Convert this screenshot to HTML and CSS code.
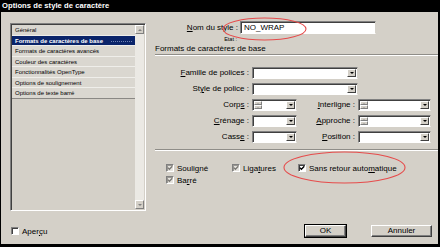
FILE: index.html
```html
<!DOCTYPE html>
<html lang="fr">
<head>
<meta charset="utf-8">
<link rel="stylesheet" href="styles.css">
</head>
<body>
<div class="window">
  <div class="titlebar">Options de style de caractère</div>
  <div class="client">
    <div class="left">
      <div class="list">
        <div class="rows">
          <div class="row">Général</div>
          <div class="row sel"><span>Formats de caractères de base</span></div>
          <div class="row">Formats de caractères avancés</div>
          <div class="row">Couleur des caractères</div>
          <div class="row">Fonctionnalités OpenType</div>
          <div class="row">Options de soulignement</div>
          <div class="row last">Options de texte barré</div>
        </div>
        <div class="scroll">
          <div class="sbtn"><span class="up"></span></div>
          <div class="track"></div>
          <div class="sbtn"><span class="down"></span></div>
        </div>
      </div>
      <div class="apercu"><span class="cb white"></span><span>Aper<u>ç</u>u</span></div>
    </div>
    <div class="right">
      <div class="name-row">
        <label class="name-label"><u>N</u>om du style :</label>
        <div class="field name-field">NO_WRAP</div>
      </div>
      <div class="etat">Etat :</div>
      <div class="section">Formats de caractères de base</div>
      <div class="sep"></div>
      <div class="form">
        <label class="lbl"><u>F</u>amille de polices :</label>
        <div class="field combo wide"><span class="fill"></span><span class="dd"><i></i></span></div>
        <span></span>
        <label class="lbl">St<u>y</u>le de police :</label>
        <div class="field combo wide"><span class="fill"></span><span class="dd"><i></i></span></div>
        <span></span>
        <label class="lbl">Corp<u>s</u> :</label>
        <div class="field combo"><span class="spin"><b><i class="su"></i></b><b><i class="sd"></i></b></span><span class="fill"></span><span class="dd"><i></i></span></div>
        <label class="lbl"><u>I</u>nterligne :</label>
        <div class="field combo"><span class="spin"><b><i class="su"></i></b><b><i class="sd"></i></b></span><span class="fill"></span><span class="dd"><i></i></span></div>
        <label class="lbl"><u>C</u>rénage :</label>
        <div class="field combo"><span class="fill"></span><span class="dd"><i></i></span></div>
        <label class="lbl"><u>A</u>pproche :</label>
        <div class="field combo"><span class="spin"><b><i class="su"></i></b><b><i class="sd"></i></b></span><span class="fill"></span><span class="dd"><i></i></span></div>
        <label class="lbl">Cass<u>e</u> :</label>
        <div class="field combo"><span class="fill"></span><span class="dd"><i></i></span></div>
        <label class="lbl"><u>P</u>osition :</label>
        <div class="field combo"><span class="fill"></span><span class="dd"><i></i></span></div>
      </div>
      <div class="sep sep2"></div>
      <div class="checks">
        <div class="chk"><span class="cb gray"><svg viewBox="0 0 6 6"><path d="M0.8 2.6 L2.4 4.3 L5.3 1.2"/></svg></span><span>Souli<u>g</u>né</span></div>
        <div class="chk"><span class="cb gray"><svg viewBox="0 0 6 6"><path d="M0.8 2.6 L2.4 4.3 L5.3 1.2"/></svg></span><span>Liga<u>t</u>ures</span></div>
        <div class="chk"><span class="cb white"><svg class="blk" viewBox="0 0 6 6"><path d="M0.8 2.6 L2.4 4.3 L5.3 1.2"/></svg></span><span>Sans retour auto<u>m</u>atique</span></div>
        <div class="chk"><span class="cb gray"><svg viewBox="0 0 6 6"><path d="M0.8 2.6 L2.4 4.3 L5.3 1.2"/></svg></span><span>Ba<u>r</u>ré</span></div>
      </div>
      <div class="buttons">
        <div class="btn ok">OK</div>
        <div class="btn cancel">Annuler</div>
      </div>
    </div>
  </div>
  <svg class="marks" width="440" height="247" viewBox="0 0 440 247">
    <ellipse cx="264.5" cy="29" rx="41.5" ry="11" />
    <ellipse cx="344.5" cy="167.5" rx="60.5" ry="15.5" />
  </svg>
</div>
</body>
</html>
```
FILE: styles.css
```css
* { box-sizing: border-box; }
html, body { margin: 0; padding: 0; }
body {
  width: 440px;
  height: 247px;
  overflow: hidden;
  font-family: "Liberation Sans", Arial, sans-serif;
  font-size: 8px;
  color: #000;
}
u { text-decoration: underline; text-underline-offset: 1px; }
.window {
  position: relative;
  width: 440px;
  height: 247px;
  background: #000;
  display: flex;
  flex-direction: column;
}
.titlebar {
  height: 12px;
  line-height: 12px;
  padding-left: 2px;
  color: #fff;
  font-weight: bold;
  font-size: 7.6px;
  letter-spacing: 0.05px;
}
.client {
  flex: 1;
  margin: 0 2px 3px 1px;
  background: #d4d0c8;
  display: flex;
}
.left {
  width: 145px;
  padding: 11px 0 0 9px;
  display: flex;
  flex-direction: column;
}
.list {
  width: 136px;
  height: 188px;
  border-top: 1px solid #808080;
  border-left: 1px solid #808080;
  border-bottom: 1px solid #fff;
  border-right: 1px solid #fff;
  box-shadow: inset 1px 1px 0 #404040, inset -1px -1px 0 #d4d0c8;
  padding: 1px;
  display: flex;
  background: #d4d0c8;
}
.rows { flex: 1; }
.row {
  height: 10.5px;
  line-height: 10px;
  font-size: 6px;
  padding-left: 3px;
  background: #dad7d0;
  border-bottom: 1px solid #efeeea;
  white-space: nowrap;
}
.row.last { border-bottom: 1px solid #8a8884; }
.row.sel {
  background: #0a246a;
  color: #fff;
  font-weight: bold;
  position: relative;
}
.row.sel::after {
  content: "";
  position: absolute;
  left: 99px;
  right: 3px;
  top: 5px;
  border-top: 1px dotted #6f82b4;
}
.scroll {
  width: 9px;
  display: flex;
  flex-direction: column;
  background: #ebe9e4;
}
.track { flex: 1; }
.sbtn {
  height: 9px;
  background: #d4d0c8;
  border-top: 1px solid #fff;
  border-left: 1px solid #fff;
  border-right: 1px solid #808080;
  border-bottom: 1px solid #808080;
  display: flex;
  align-items: center;
  justify-content: center;
}
.up, .down { width: 0; height: 0; border-left: 2px solid transparent; border-right: 2px solid transparent; }
.up { border-bottom: 2px solid #808080; }
.down { border-top: 2px solid #808080; }
.apercu {
  margin-top: 15px;
  display: flex;
  align-items: center;
  gap: 3px;
  height: 10px;
  padding-left: 1px;
}
.right {
  flex: 1;
  margin-left: 9px;
  padding-top: 9px;
  padding-bottom: 7px;
  display: flex;
  flex-direction: column;
}
.name-row {
  display: flex;
  align-items: center;
  height: 13px;
}
.name-label {
  width: 83px;
  text-align: right;
  margin-right: 2px;
  white-space: nowrap;
}
.field {
  background: #fff;
  border-top: 1px solid #808080;
  border-left: 1px solid #808080;
  border-bottom: 1px solid #fff;
  border-right: 1px solid #d4d0c8;
  box-shadow: inset 1px 1px 0 #404040;
}
.name-field {
  width: 136px;
  height: 13px;
  line-height: 11px;
  padding-left: 3px;
  font-size: 8px;
}
.etat {
  width: 82px;
  height: 10px;
  line-height: 10px;
  text-align: right;
  font-size: 5.5px;
}
.section {
  height: 10px;
  line-height: 10px;
  font-size: 8px;
  white-space: nowrap;
}
.sep {
  height: 2px;
  border-top: 1px solid #8f8d88;
  border-bottom: 1px solid #fff;
}
.form {
  margin-top: 11px;
  display: grid;
  grid-template-columns: 97px 45px 61px 73px;
  grid-auto-rows: 12px;
  row-gap: 4px;
}
.lbl {
  text-align: right;
  padding-right: 3px;
  line-height: 12px;
  white-space: nowrap;
}
.combo {
  display: flex;
  align-items: stretch;
  padding: 1px;
}
.combo.wide { grid-column: span 2; width: 106px; }
.fill { flex: 1; }
.dd {
  width: 9px;
  background: #d4d0c8;
  border-top: 1px solid #fff;
  border-left: 1px solid #fff;
  border-right: 1px solid #404040;
  border-bottom: 1px solid #404040;
  display: flex;
  align-items: center;
  justify-content: center;
}
.dd i {
  display: block;
  width: 0; height: 0;
  border-left: 2px solid transparent;
  border-right: 2px solid transparent;
  border-top: 2px solid #000;
}
.spin {
  width: 8px;
  display: flex;
  flex-direction: column;
}
.spin b {
  flex: 1;
  background: #d4d0c8;
  border-top: 1px solid #fff;
  border-left: 1px solid #fff;
  border-right: 1px solid #808080;
  border-bottom: 1px solid #808080;
  display: flex;
  align-items: center;
  justify-content: center;
}
.spin i { display: block; width: 0; height: 0; border-left: 1.5px solid transparent; border-right: 1.5px solid transparent; }
.spin .su { border-bottom: 1.5px solid #9a9893; }
.spin .sd { border-top: 1.5px solid #9a9893; }
.sep2 { margin-top: 6px; }
.checks {
  margin-top: 12px;
  padding-left: 11px;
  display: grid;
  grid-template-columns: 66px 66px auto;
  grid-auto-rows: 10px;
  row-gap: 2px;
}
.chk {
  display: flex;
  align-items: center;
  gap: 3px;
  white-space: nowrap;
}
.cb {
  width: 8px;
  height: 8px;
  flex: none;
  border-top: 1px solid #808080;
  border-left: 1px solid #808080;
  border-bottom: 1px solid #fff;
  border-right: 1px solid #fff;
  display: flex;
  align-items: center;
  justify-content: center;
}
.cb.white { background: #fff; box-shadow: inset 1px 1px 0 #404040; }
.cb.gray { background: #e6e4df; box-shadow: inset 1px 1px 0 #9a9893; }
.cb svg { width: 6px; height: 6px; display: block; }
.cb svg path { fill: none; stroke: #7a7874; stroke-width: 1.3; }
.cb svg.blk path { stroke: #000; }
.buttons {
  margin-top: auto;
  display: flex;
  justify-content: flex-end;
  gap: 25px;
  padding-right: 6px;
}
.btn {
  height: 12px;
  line-height: 10px;
  text-align: center;
  background: #d4d0c8;
  border-top: 1px solid #fff;
  border-left: 1px solid #fff;
  border-right: 1px solid #404040;
  border-bottom: 1px solid #404040;
  box-shadow: inset -1px -1px 0 #808080;
}
.btn.ok { width: 41px; outline: 1px solid #000; border-color: #fff #404040 #404040 #fff; }
.btn.cancel { width: 61px; }
.marks {
  position: absolute;
  left: 0;
  top: 0;
  pointer-events: none;
}
.marks ellipse { fill: none; stroke: #e64b4b; stroke-width: 1.1; }
```
